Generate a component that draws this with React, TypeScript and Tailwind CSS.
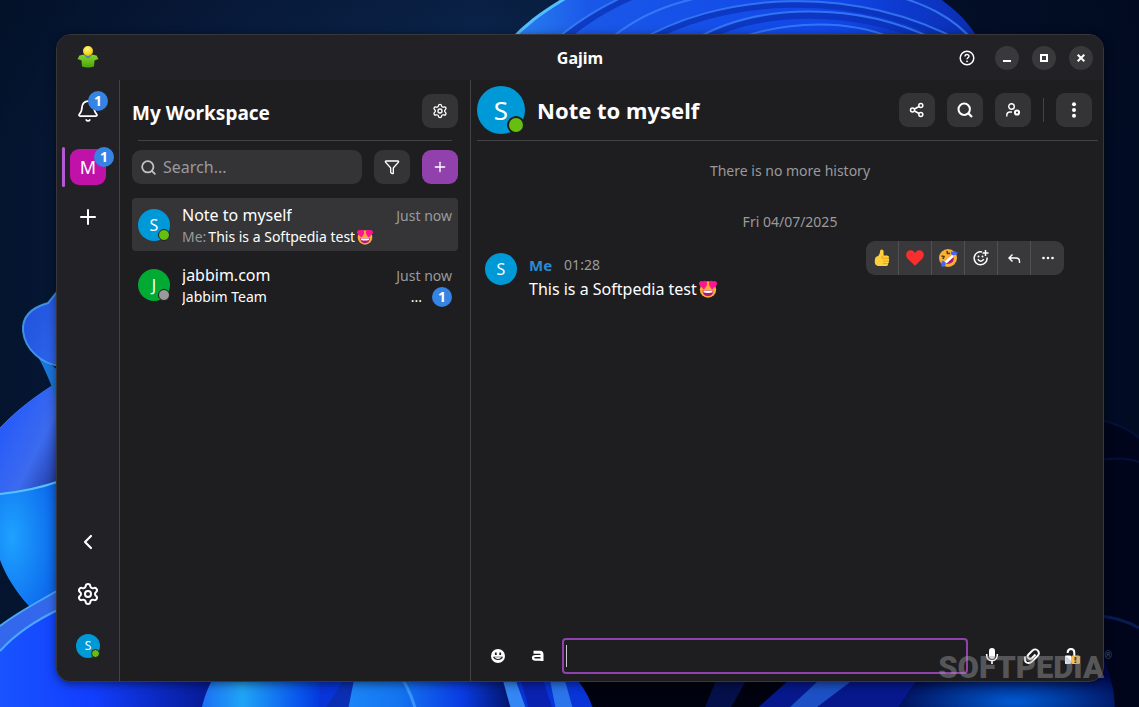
import { useState, type ReactNode } from "react";
import { Bell, ChevronLeft, Filter, Plus, Search, Settings } from "lucide-react";

type Status = "online" | "offline";

type Conversation = {
  id: string;
  name: string;
  initial: string;
  color: string;
  status: Status;
  sender?: string;
  preview: string;
  emoji?: boolean;
  time: string;
  unread?: number;
};

const CONVERSATIONS: Conversation[] = [
  {
    id: "self",
    name: "Note to myself",
    initial: "S",
    color: "bg-[#0099d8]",
    status: "online",
    sender: "Me:",
    preview: "This is a Softpedia test",
    emoji: true,
    time: "Just now",
  },
  {
    id: "jabbim",
    name: "jabbim.com",
    initial: "J",
    color: "bg-[#00aa33]",
    status: "offline",
    preview: "Jabbim Team",
    time: "Just now",
    unread: 1,
  },
];

function Wallpaper() {
  return (
    <svg
      className="absolute inset-0 size-full"
      viewBox="0 0 1139 707"
      preserveAspectRatio="none"
      aria-hidden
    >
      <defs>
        <linearGradient id="sky" x1="0" x2="1" y1="0" y2="0">
          <stop offset="0" stopColor="#04142e" />
          <stop offset="0.22" stopColor="#0a2046" />
          <stop offset="0.42" stopColor="#0c2a55" />
          <stop offset="0.8" stopColor="#04122e" />
          <stop offset="1" stopColor="#010b22" />
        </linearGradient>
        <linearGradient id="shade" x1="0" x2="0" y1="0" y2="1">
          <stop offset="0" stopColor="#020a1c" stopOpacity="0.3" />
          <stop offset="0.2" stopColor="#020a1c" stopOpacity="0" />
        </linearGradient>
        <linearGradient id="bloom" x1="0" x2="1" y1="0" y2="0">
          <stop offset="0" stopColor="#2f8cf4" />
          <stop offset="0.2" stopColor="#1a58e8" />
          <stop offset="0.7" stopColor="#1046e8" />
          <stop offset="1" stopColor="#0a2cae" />
        </linearGradient>
        <linearGradient id="petal" x1="0" x2="1" y1="0" y2="1">
          <stop offset="0" stopColor="#1c52ff" />
          <stop offset="0.6" stopColor="#3c6bee" />
          <stop offset="1" stopColor="#1a2c8c" />
        </linearGradient>
        <linearGradient id="curl" x1="0" x2="1" y1="0" y2="1">
          <stop offset="0" stopColor="#1f4fd8" />
          <stop offset="1" stopColor="#2f66f0" />
        </linearGradient>
        <radialGradient id="cyan" cx="0.2" cy="0.45" r="0.8">
          <stop offset="0" stopColor="#1ea2ff" />
          <stop offset="1" stopColor="#0c66ec" />
        </radialGradient>
        <linearGradient id="floor" x1="0" x2="1" y1="0" y2="0">
          <stop offset="0" stopColor="#1854ff" />
          <stop offset="0.4" stopColor="#123eff" />
          <stop offset="1" stopColor="#041480" />
        </linearGradient>
        <linearGradient id="leafA" x1="0" x2="1" y1="0" y2="0">
          <stop offset="0" stopColor="#1c6df4" />
          <stop offset="0.35" stopColor="#20a4f6" />
          <stop offset="0.8" stopColor="#0a58ee" />
          <stop offset="1" stopColor="#0436dc" />
        </linearGradient>
        <linearGradient id="leafB" x1="0" x2="1" y1="0" y2="0">
          <stop offset="0" stopColor="#1c86f8" />
          <stop offset="0.3" stopColor="#1474f0" />
          <stop offset="0.65" stopColor="#0a3ce4" />
          <stop offset="1" stopColor="#010a4a" />
        </linearGradient>
        <radialGradient id="glow" cx="0.55" cy="0.7" r="0.6">
          <stop offset="0" stopColor="#005ad2" />
          <stop offset="1" stopColor="#02074a" />
        </radialGradient>
      </defs>

      <rect width="1139" height="707" fill="url(#sky)" />
      <rect width="1139" height="707" fill="url(#shade)" />

      {/* bloom behind the title bar */}
      <path d="M496 60C520 26 545 10 574-8H930C955 8 972 24 984 50V70H490Z" fill="url(#bloom)" />
      <path d="M496 58C520 26 545 10 576-8" stroke="#52bdff" strokeWidth="3" fill="none" />
      <g fill="none" stroke="#0a2fb4" strokeWidth="7" strokeOpacity="0.7">
        <path d="M548 54C578 22 612 4 642-8" />
        <path d="M640 44C720-4 850-14 962 44" />
        <path d="M700 40C760 8 850 6 930 40" />
      </g>
      <g fill="none" stroke="#3f86fa" strokeWidth="2" strokeOpacity="0.75">
        <path d="M540 54C572 22 606 4 634-8" />
        <path d="M598 50C640 8 690-2 730-8" />
        <path d="M634 44C716-8 856-18 966 44" />
        <path d="M694 40C756 3 856 1 936 40" />
        <path d="M740 38C790 20 850 20 892 38" />
        <path d="M880-8C925 2 955 18 976 44" />
      </g>

      {/* left petals */}
      <path d="M60 381C35 396 15 412 0 428V500L60 490Z" fill="url(#petal)" />
      <path d="M0 428C15 412 35 396 60 381" stroke="#2f74ff" strokeWidth="1" fill="none" />
      <path d="M34 350L60 372V410C52 385 44 366 34 350Z" fill="#1a75dc" />
      <path d="M60 288L48 303C30 308 22 318 23 331C25 350 42 364 60 366Z" fill="url(#curl)" />
      <path
        d="M60 288L48 303C30 308 22 318 23 331C25 350 42 364 60 366"
        stroke="#48a8f4"
        strokeWidth="2"
        strokeOpacity="0.8"
        fill="none"
      />
      <path d="M0 494C20 492 40 488 60 481V600L29 606C16 592 6 576 0 560Z" fill="url(#cyan)" />
      <path d="M0 494C20 492 40 488 60 481" stroke="#54c4ff" strokeWidth="2" fill="none" />
      <path d="M0 626C18 612 38 602 62 588V720H0Z" fill="#3468ec" />
      <path d="M0 626C18 612 38 602 62 588" stroke="#4ca8f8" strokeWidth="2" fill="none" />
      <path d="M0 651C16 633 36 620 62 608V670H230V720H0Z" fill="url(#floor)" />
      <path d="M0 651C16 633 36 620 62 608" stroke="#4ca8f8" strokeWidth="2" fill="none" />

      {/* petals under the window */}
      <path d="M320 670H600V720H310Z" fill="#0834d8" />
      <path d="M200 720C202 700 208 686 218 670H322L318 720Z" fill="url(#leafA)" />
      <path d="M318 720L350 670H372L346 720Z" fill="#0b2fb4" />
      <path d="M346 720C350 700 352 690 356 670H510L524 720Z" fill="url(#leafB)" />
      <path d="M396 670Q412 690 418 720" stroke="#4aa6ff" strokeWidth="3" strokeOpacity="0.7" fill="none" />
      <path d="M500 670L514 720H530L512 670Z" fill="#3486f4" />
      <path d="M518 670L532 720H556L540 670Z" fill="#0a22b0" />
      <path d="M548 670L558 720H576L562 670Z" fill="#2a74ec" />
      <path d="M568 670Q590 690 596 720H1139V670Z" fill="#01020f" />
      <path d="M720 670L700 720H724L752 670Z" fill="#04104a" />
      <path d="M800 670L744 720H890L924 670Z" fill="#06188c" />
      <path d="M830 670L776 720H800L866 670Z" fill="#1c50c4" />
      <path d="M924 670L890 720H1114C1116 700 1114 684 1104 660Z" fill="url(#glow)" />

      {/* right edge */}
      <path d="M1100 420C1118 424 1130 430 1139 438V720H1116C1116 690 1110 670 1100 650Z" fill="#01051c" />
      <path d="M1100 420C1118 424 1130 430 1139 438" stroke="#06184c" strokeWidth="2" strokeOpacity="0.6" fill="none" />
      <path d="M1100 460Q1124 456 1139 462" stroke="#06184c" strokeWidth="2" strokeOpacity="0.6" fill="none" />
      <path d="M1100 616Q1122 618 1139 628" stroke="#0b2a74" strokeWidth="3" strokeOpacity="0.6" fill="none" />
    </svg>
  );
}

function AppLogo() {
  return (
    <svg className="ml-2.5" width="22" height="24" viewBox="0 0 22 24" aria-hidden>
      <defs>
        <linearGradient id="shirt" x1="0" x2="0" y1="0" y2="1">
          <stop offset="0" stopColor="#86d62a" />
          <stop offset="1" stopColor="#4aa30e" />
        </linearGradient>
        <radialGradient id="head" cx="0.4" cy="0.3" r="0.8">
          <stop offset="0" stopColor="#fff68a" />
          <stop offset="0.6" stopColor="#f6d81c" />
          <stop offset="1" stopColor="#d8a808" />
        </radialGradient>
      </defs>
      <path
        d="M7 8.500L2.500 9.500L.5 13L4.500 14.500L5 20.500Q11 22.500 17 20.500L17.500 14.500L21.500 13L19.500 9.500L15 8.500Q11 14 7 8.500Z"
        fill="url(#shirt)"
      />
      <path d="M8 9H14L12.500 12H9.500Z" fill="#4d82c4" />
      <circle cx="11" cy="5" r="5" fill="url(#head)" />
    </svg>
  );
}

function HeartEyes({ size }: { size: number }) {
  return (
    <svg
      className="inline-block shrink-0"
      width={size}
      height={size}
      viewBox="0 0 18 18"
      role="img"
      aria-label="heart eyes"
    >
      <circle cx="9" cy="9.500" r="8.200" fill="#fcab35" />
      <path d="M3.500 10.500H14.500Q14 16 9 16T3.500 10.500Z" fill="#b0177a" />
      <path d="M4.500 10.800H13.500V12.300Q9 13.500 4.500 12.300Z" fill="#fff" />
      <path
        d="M4.800 9.500L.3 5C-.8 2.500 1.500.2 3.800 1.500C5.500-.2 8.300 1 8 3.600C8 6 6.500 8 4.800 9.500ZM13.200 9.500L17.700 5C18.800 2.500 16.500.2 14.200 1.500C12.500-.2 9.700 1 10 3.600C10 6 11.500 8 13.200 9.500Z"
        fill="#ff1493"
      />
    </svg>
  );
}

function ThumbsUp() {
  return (
    <svg width="16" height="18" viewBox="0 0 16 18" aria-hidden>
      <path
        d="M6.200 1.500C6.800-.2 9.500.3 9.600 2.500V6.500H13C15 6.500 15.300 8.500 14.500 9.200C15.600 10 15.400 11.500 14.500 12C15.300 13 15 14.200 14 14.600C14.300 16 13.500 17 12 17H5.500C2 17 .8 15.500.8 12.500C.8 9 1.500 7.800 3.500 7.300C5 6.500 6 4.500 6.200 1.500Z"
        fill="#fdd03c"
      />
      <path d="M9 9.200H14M9 12H14M9 14.600H13.500" stroke="#e8a21c" strokeWidth="1" />
      <path d="M8.500 7Q7 9 8.500 10" stroke="#e8a21c" strokeWidth="1" fill="none" />
    </svg>
  );
}

function Heart() {
  return (
    <svg width="18" height="16" viewBox="0 0 18 16" aria-hidden>
      <path
        d="M9 15.700L1.500 8.500C-1.500 4.500 1 .3 4.600.3C6.600.3 8.200 1.500 9 3C9.800 1.500 11.400.3 13.400.3C17 .3 19.500 4.500 16.500 8.500Z"
        fill="#f92f2f"
      />
    </svg>
  );
}

function Rofl() {
  return (
    <svg width="20" height="20" viewBox="0 0 20 20" aria-hidden>
      <circle cx="10" cy="10" r="9" fill="#fbb034" />
      <path d="M15.500 8.500Q17 16 8.500 16L7 13.500Z" fill="#b0177a" />
      <path d="M14 7L15.800 8.800L8.500 15.500L6.700 13.500Z" fill="#fff" />
      <path d="M3.500 8L6 8.500L5 11M9 2.800L9.500 5.500L12 5.500" stroke="#5c3a10" strokeWidth="1.600" fill="none" />
      <path d="M12.500 3.800Q17 3 19.600 4.500Q19.500 7.800 13.500 6.800Z" fill="#4665f0" />
      <path d="M4.500 12.500Q2.300 16 4 19Q8.500 18.500 7.500 14.500Z" fill="#4665f0" />
    </svg>
  );
}

const STATUS_COLORS: Record<Status, string> = {
  online: "bg-[#66bf10]",
  offline: "bg-[#9a9a9a]",
};

const AVATAR_SIZES = {
  sm: "size-6 text-xs",
  md: "size-8 text-base",
  lg: "size-12 text-[26px]",
};

const DOT_SIZES = {
  sm: "size-[9px] right-0 bottom-0 border",
  md: "size-3 right-0 bottom-0 border",
  lg: "size-[18px] right-0 bottom-0 border-2",
};

function Avatar({
  initial,
  color,
  status,
  size = "md",
}: {
  initial: string;
  color: string;
  status?: Status;
  size?: keyof typeof AVATAR_SIZES;
}) {
  return (
    <span
      className={[
        "relative flex shrink-0 items-center justify-center rounded-full leading-none text-white",
        AVATAR_SIZES[size],
        color,
      ].join(" ")}
    >
      {initial}
      {status ? (
        <span
          className={["absolute rounded-full border-[#1e1e20]", DOT_SIZES[size], STATUS_COLORS[status]].join(" ")}
        />
      ) : null}
    </span>
  );
}

function Badge({ count }: { count: number }) {
  return (
    <span className="flex size-5 shrink-0 items-center justify-center rounded-full bg-[#3584e4] text-sm font-bold leading-none text-white">
      {count}
    </span>
  );
}

function ToolButton({
  label,
  accent = false,
  children,
}: {
  label: string;
  accent?: boolean;
  children: ReactNode;
}) {
  return (
    <button
      type="button"
      aria-label={label}
      className={[
        "flex h-[34px] w-9 shrink-0 items-center justify-center rounded-[9px] text-white",
        accent ? "bg-[#9141ac]" : "bg-[#343436]",
      ].join(" ")}
    >
      {children}
    </button>
  );
}

function TitleBar() {
  return (
    <header className="grid h-[45px] shrink-0 grid-cols-[1fr_auto_1fr] items-center bg-[#222226] px-2.5">
      <AppLogo />
      <h1 className="text-base font-bold text-white">Gajim</h1>
      <div className="flex items-center justify-end gap-[13px] text-white">
        <button type="button" aria-label="Help" className="mr-[7px] flex size-4 items-center justify-center">
          <svg width="16" height="16" viewBox="0 0 16 16" fill="none" stroke="currentColor" aria-hidden>
            <circle cx="8" cy="8" r="6.800" strokeWidth="1.500" />
            <path d="M6 6.500C6 3.800 10 3.900 10 6.300C10 7.800 8 7.800 8 9.300" strokeWidth="1.400" />
            <circle cx="8" cy="11.300" r=".9" fill="currentColor" stroke="none" />
          </svg>
        </button>
        <button type="button" aria-label="Minimize" className="flex size-6 items-center justify-center rounded-full bg-[#39393c]">
          <svg width="8" height="8" viewBox="0 0 8 8" aria-hidden>
            <path d="M0 7H8" stroke="currentColor" strokeWidth="2" />
          </svg>
        </button>
        <button type="button" aria-label="Maximize" className="flex size-6 items-center justify-center rounded-full bg-[#39393c]">
          <svg width="8" height="8" viewBox="0 0 8 8" aria-hidden>
            <path d="M1 1H7V7H1Z" stroke="currentColor" strokeWidth="2" fill="none" />
          </svg>
        </button>
        <button type="button" aria-label="Close" className="flex size-6 items-center justify-center rounded-full bg-[#39393c]">
          <svg width="8" height="8" viewBox="0 0 8 8" aria-hidden>
            <path d="M.7.7L7.300 7.300M7.300.7L.7 7.300" stroke="currentColor" strokeWidth="2" />
          </svg>
        </button>
      </div>
    </header>
  );
}

function SideBar() {
  const item = "relative flex h-10 w-full items-center justify-center text-white";
  return (
    <nav className="flex w-[63px] shrink-0 flex-col border-r border-[#434346] bg-[#222226] pt-[11px] pb-[15px]">
      <button type="button" aria-label="Notifications" className={item}>
        <Bell size={24} strokeWidth={1.75} />
        <span className="absolute top-0 right-[11px]">
          <Badge count={1} />
        </span>
      </button>
      <button type="button" aria-label="My Workspace" className={`${item} mt-4`}>
        <span className="absolute left-[5px] h-10 w-[3px] rounded-full bg-[#b558d6]" />
        <span className="flex size-9 items-center justify-center rounded-[9px] bg-[#c011a8] text-lg leading-none">M</span>
        <span className="absolute top-0 right-[5px]">
          <Badge count={1} />
        </span>
      </button>
      <button type="button" aria-label="Add workspace" className={`${item} mt-2.5`}>
        <Plus size={24} strokeWidth={2} />
      </button>
      <div className="mt-auto flex flex-col gap-3">
        <button type="button" aria-label="Collapse" className={item}>
          <ChevronLeft size={24} strokeWidth={2.2} />
        </button>
        <button type="button" aria-label="Preferences" className={item}>
          <Settings size={24} strokeWidth={2} />
        </button>
        <button type="button" aria-label="Account" className={item}>
          <Avatar initial="S" color="bg-[#0099d8]" status="online" size="sm" />
        </button>
      </div>
    </nav>
  );
}

function ConversationRow({
  conversation,
  selected,
  onSelect,
}: {
  conversation: Conversation;
  selected: boolean;
  onSelect: () => void;
}) {
  const { name, initial, color, status, sender, preview, emoji, time, unread } = conversation;
  return (
    <li>
      <button
        type="button"
        onClick={onSelect}
        className={[
          "flex h-[53px] w-full items-center gap-3 rounded-[4px] px-1.5 text-left",
          selected ? "bg-[#353537]" : "",
        ].join(" ")}
      >
        <Avatar initial={initial} color={color} status={status} />
        <span className="flex min-w-0 flex-1 flex-col">
          <span className="flex items-baseline justify-between leading-6">
            <span className="truncate text-base text-white">{name}</span>
            <span className="text-sm text-[#9a9a9c]">{time}</span>
          </span>
          <span className="flex h-5 items-center text-sm text-white">
            {sender ? <span className="mr-0.5 text-[#9a9a9c]">{sender}</span> : null}
            <span className="truncate">{preview}</span>
            {emoji ? (
              <span className="ml-0.5 flex">
                <HeartEyes size={16} />
              </span>
            ) : null}
            {unread ? (
              <span className="ml-auto flex items-center gap-2.5">
                <span>...</span>
                <Badge count={unread} />
              </span>
            ) : null}
          </span>
        </span>
      </button>
    </li>
  );
}

function ChatList({ selected, onSelect }: { selected: string; onSelect: (id: string) => void }) {
  return (
    <aside className="flex w-[351px] shrink-0 flex-col border-r border-[#434346] px-3">
      <div className="flex h-[60px] items-center justify-between pt-0.5">
        <h2 className="pt-1 text-[19px] font-bold text-white">My Workspace</h2>
        <ToolButton label="Workspace settings">
          <Settings size={16} strokeWidth={2} />
        </ToolButton>
      </div>
      <hr className="mx-1.5 border-[#434346]" />
      <div className="mt-[9px] flex gap-3">
        <label className="flex h-[34px] min-w-0 flex-1 items-center gap-1.5 rounded-[9px] bg-[#343436] pr-2 pl-2 text-[#c4c4c6]">
          <Search size={17} strokeWidth={2.5} />
          <input
            type="search"
            aria-label="Search"
            placeholder="Search..."
            className="min-w-0 flex-1 bg-transparent text-base text-white outline-none placeholder:text-[#9a9a9c]"
          />
        </label>
        <ToolButton label="Filter">
          <Filter size={16} strokeWidth={2} />
        </ToolButton>
        <ToolButton label="New chat" accent>
          <Plus size={16} strokeWidth={2} />
        </ToolButton>
      </div>
      <ul className="mt-3.5 flex flex-col gap-[7px]">
        {CONVERSATIONS.map((conversation) => (
          <ConversationRow
            key={conversation.id}
            conversation={conversation}
            selected={conversation.id === selected}
            onSelect={() => onSelect(conversation.id)}
          />
        ))}
      </ul>
    </aside>
  );
}

function ChatHeader() {
  return (
    <div className="mr-[5px] ml-1.5 flex h-[61px] shrink-0 items-center gap-3 border-b border-[#434346] pr-1.5">
      <Avatar initial="S" color="bg-[#0099d8]" status="online" size="lg" />
      <h2 className="mr-auto text-[22px] font-bold text-white">Note to myself</h2>
      <ToolButton label="Share">
        <svg width="16" height="16" viewBox="0 0 16 16" fill="none" stroke="currentColor" strokeWidth="1.500" aria-hidden>
          <circle cx="3.500" cy="8" r="2" />
          <circle cx="11.800" cy="3.500" r="2" />
          <circle cx="11.800" cy="12.500" r="2" />
          <path d="M5.500 7L10 4.500M5.500 9L10 11.500" />
        </svg>
      </ToolButton>
      <ToolButton label="Search history">
        <svg width="16" height="16" viewBox="0 0 16 16" fill="none" stroke="currentColor" aria-hidden>
          <circle cx="7.200" cy="7.200" r="5.700" strokeWidth="2" />
          <path d="M11.300 11.300L15 15" strokeWidth="2.200" />
        </svg>
      </ToolButton>
      <ToolButton label="Contact details">
        <svg width="16" height="16" viewBox="0 0 16 16" fill="none" stroke="currentColor" strokeWidth="1.400" aria-hidden>
          <circle cx="6.500" cy="4.500" r="2.800" />
          <path d="M1.800 14.500V13.500Q1.800 10 5 10H7" />
          <circle cx="12" cy="10.500" r="2.100" strokeWidth="2" />
        </svg>
      </ToolButton>
      <span className="h-6 w-px bg-[#434346]" />
      <ToolButton label="Menu">
        <svg width="16" height="16" viewBox="0 0 16 16" fill="currentColor" aria-hidden>
          <circle cx="8" cy="2.200" r="2" />
          <circle cx="8" cy="8" r="2" />
          <circle cx="8" cy="13.800" r="2" />
        </svg>
      </ToolButton>
    </div>
  );
}

function ReactionBar() {
  const actions = [
    { label: "Thumbs up", icon: <ThumbsUp /> },
    { label: "Heart", icon: <Heart /> },
    { label: "Laugh", icon: <Rofl /> },
    {
      label: "Add reaction",
      icon: (
        <svg width="16" height="16" viewBox="0 0 16 16" fill="none" stroke="currentColor" strokeWidth="1.500" aria-hidden>
          <path d="M9 1.900A6.500 6.500 0 1 0 14.100 7.500" />
          <path d="M4.800 9.300Q7.800 13 10.800 9.300M12.500 0V6M9.500 3H15.500" />
          <circle cx="5.500" cy="6.500" r="1" fill="currentColor" stroke="none" />
          <circle cx="9.500" cy="6.500" r="1" fill="currentColor" stroke="none" />
        </svg>
      ),
    },
    {
      label: "Reply",
      icon: (
        <svg width="14" height="12" viewBox="0 0 14 12" fill="none" stroke="currentColor" strokeWidth="1.400" aria-hidden>
          <path d="M5.500 2.500L2 6L5.500 9.500M2 6H9Q12.500 6 12.500 9.500V11" />
        </svg>
      ),
    },
    {
      label: "More",
      icon: (
        <svg width="14" height="4" viewBox="0 0 14 4" fill="currentColor" aria-hidden>
          <circle cx="2.500" cy="2" r="1.300" />
          <circle cx="7" cy="2" r="1.300" />
          <circle cx="11.500" cy="2" r="1.300" />
        </svg>
      ),
    },
  ];

  return (
    <div className="absolute -top-3 right-[39px] flex h-[34px] divide-x divide-[#505053] overflow-hidden rounded-[9px] bg-[#39393c] text-white">
      {actions.map(({ label, icon }) => (
        <button key={label} type="button" aria-label={label} className="flex w-[33px] items-center justify-center">
          {icon}
        </button>
      ))}
    </div>
  );
}

function Composer() {
  const [text, setText] = useState("");
  const action = "flex h-9 w-10 shrink-0 items-center justify-center text-white";
  return (
    <form className="flex gap-1 pr-[11px] pb-[7px] pl-[7px]" onSubmit={(e) => e.preventDefault()}>
      <div className="flex">
        <button type="button" aria-label="Emoji" className={action}>
          <svg width="16" height="16" viewBox="0 0 16 16" aria-hidden>
            <circle cx="8" cy="8" r="7" fill="currentColor" />
            <path d="M5.800 4.500V7M10.200 4.500V7" stroke="#1e1e20" strokeWidth="1.800" />
            <path d="M3 8.800H13Q11.800 12 8 12T3 8.800Z" fill="#1e1e20" />
            <path d="M4.500 9.200H11.500Q10.300 10.900 8 10.900T4.500 9.200Z" fill="currentColor" />
          </svg>
        </button>
        <button type="button" aria-label="Formatting" className={action}>
          {/* lowercase letter symbol with a square bowl */}
          <svg width="14" height="12" viewBox="0 0 14 12" fill="none" stroke="currentColor" aria-hidden>
            <path d="M2.500 2.200H9Q11 2.200 11 4.500V11" strokeWidth="3" />
            <path d="M11 6H4.500Q2 6 2 7.800T4.500 9.700H11" strokeWidth="2.200" />
          </svg>
        </button>
      </div>
      <div className="relative flex h-9 min-w-0 flex-1">
        <textarea
          aria-label="Message"
          rows={1}
          value={text}
          onChange={(e) => setText(e.target.value)}
          className="h-full w-full resize-none rounded-[4px] border-2 border-[#9141ac] bg-transparent px-1 py-1 text-base leading-6 text-white outline-none"
        />
        {text ? null : <span className="absolute top-[7px] left-1 h-[22px] w-px bg-[#c8c8ca]" />}
      </div>
      <div className="flex">
        <button type="button" aria-label="Voice message" className={action}>
          <svg width="16" height="16" viewBox="0 0 16 16" aria-hidden>
            <rect x="5" y="0" width="6" height="11" rx="3" fill="currentColor" />
            <path d="M2.700 6V7.500A5.300 5.300 0 0 0 13.300 7.500V6M8 12.500V16" stroke="currentColor" strokeWidth="1.600" fill="none" />
          </svg>
        </button>
        <button type="button" aria-label="Attach file" className={action}>
          <svg width="16" height="16" viewBox="0 0 16 16" fill="none" stroke="currentColor" strokeWidth="1.900" aria-hidden>
            <path d="M1 8.500V11.500Q1 15 4.500 15H5Q6.500 15 8 13.500L13.500 8C17 4.500 12.500-1 8.500 2.500L4.500 6.500C2 9 5.500 12.500 8 10L11.500 6.500" />
          </svg>
        </button>
        <button type="button" aria-label="Encryption" className={action}>
          <svg width="16" height="16" viewBox="0 0 16 16" aria-hidden>
            <path d="M3.700 5V4.500Q3.700 1 7 1T10.300 4.500V8" stroke="currentColor" strokeWidth="2" fill="none" />
            <rect x="1" y="7.500" width="6" height="8.500" rx="1" fill="currentColor" />
            <rect x="7" y="7.500" width="9" height="8.500" rx="1.500" fill="#f8bd4f" />
            <path d="M11.500 9V12.500M11.500 13.500V15" stroke="#1e1e20" strokeWidth="1.800" />
          </svg>
        </button>
      </div>
    </form>
  );
}

function Chat() {
  return (
    <main className="flex min-w-0 flex-1 flex-col">
      <ChatHeader />
      <section className="flex flex-1 flex-col">
        <p className="mt-5 pl-1.5 text-center text-sm leading-5 text-[#9a9a9c]">There is no more history</p>
        <p className="mt-[31px] pl-1.5 text-center text-sm leading-5 text-[#9a9a9c]">Fri 04/07/2025</p>
        <article className="relative mt-[21px] flex gap-3 pl-3.5">
          <Avatar initial="S" color="bg-[#0099d8]" />
          <div>
            <p className="flex items-center gap-3 leading-6">
              <span className="text-[15px] font-bold text-[#2a8ad4]">Me</span>
              <time className="text-sm text-[#9a9a9c]">01:28</time>
            </p>
            <p className="flex items-center gap-0.5 text-base leading-6 text-white">
              This is a Softpedia test
              <HeartEyes size={18} />
            </p>
          </div>
          <ReactionBar />
        </article>
      </section>
      <Composer />
    </main>
  );
}

export default function App() {
  const [selected, setSelected] = useState("self");

  return (
    <div className="relative flex min-h-screen overflow-hidden bg-[#04142e] pt-[34px] pr-[35px] pb-[25px] pl-14 font-['Noto_Sans',sans-serif]">
      <Wallpaper />
      <div className="relative flex min-w-0 flex-1 flex-col overflow-hidden rounded-[15px] border border-[#38383b] bg-[#1e1e20] shadow-[0_2px_10px_rgba(0,0,0,0.5)]">
        <TitleBar />
        <div className="flex min-h-0 flex-1">
          <SideBar />
          <ChatList selected={selected} onSelect={setSelected} />
          <Chat />
        </div>
      </div>
      <div className="pointer-events-none absolute right-[27px] bottom-[21px] flex items-start font-['Roboto',sans-serif] text-[31px] leading-9 font-black text-[#a0a0a4]/45">
        SOFTPEDIA
        <span className="text-[10px] leading-3 font-normal">®</span>
      </div>
    </div>
  );
}
